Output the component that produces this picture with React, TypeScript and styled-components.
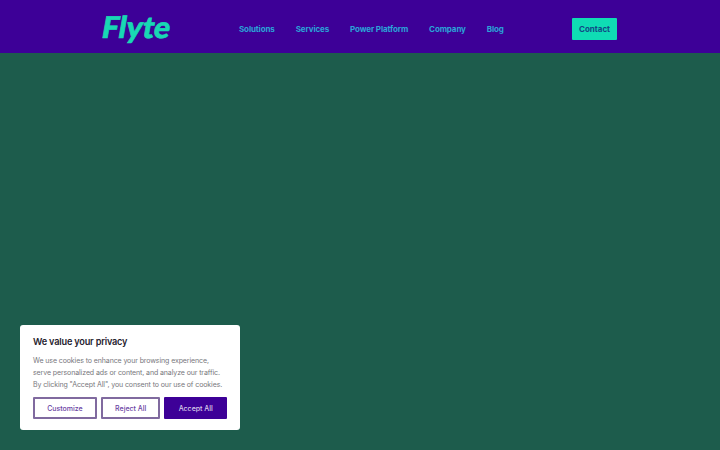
import React from "react";
import styled, { createGlobalStyle } from "styled-components";

const Global = createGlobalStyle`
  html, body { margin: 0; padding: 0; height: 100%; }
  body { background: #1d5c4c; font-family: Inter, sans-serif; }
`;
const Page = styled.div`
  width: 720px; height: 450px; overflow: hidden; background: #1d5c4c;
  display: flex; flex-direction: column;
`;
const Header = styled.header`
  height: 53px; flex: none; background: #3d0097;
  display: flex; align-items: center; padding: 5px 103px 0 102px; box-sizing: border-box;
`;
const Logo = styled.div`
  width: 137px; flex: none;
  font-family: Lato, sans-serif; font-weight: 900; font-size: 30px; line-height: 1;
  letter-spacing: 0.1px; color: #18d8b4; margin-top: -7px;
  -webkit-text-stroke: 0.7px #18d8b4;
`;
const LogoText = styled.span`
  display: inline-block; margin-left: -2px; transform: skewX(-10deg); transform-origin: 40% bottom;
`;
const Nav = styled.nav`
  flex: 1; display: flex; align-items: center; gap: 21px;
`;
const NavLink = styled.a`
  font-size: 8px; font-weight: 700; letter-spacing: -0.12px; color: #2aa4d8; line-height: 1;
`;
const Contact = styled.button`
  width: 45px; height: 22px; padding: 0; border: 0; border-radius: 1px; background: #0fdcb4;
  font: 700 8px Inter, sans-serif; color: #124a86;
`;
const Main = styled.main`
  flex: 1; position: relative;
`;
const Card = styled.section`
  position: absolute; left: 20px; bottom: 20px; width: 220px; height: 105px; box-sizing: border-box;
  background: #fff; border-radius: 3px; padding: 10px 13px;
`;
const Title = styled.h2`
  margin: 0 0 7px; font-size: 9.2px; letter-spacing: -0.2px; font-weight: 600; line-height: 13px; color: #26222e;
`;
const Body = styled.p`
  margin: 0 0 6px; font-size: 7px; letter-spacing: -0.1px; line-height: 12px; color: #77777c; white-space: nowrap;
`;
const Buttons = styled.div`
  display: flex; gap: 4px;
`;
const Btn = styled.button<{ $primary?: boolean }>`
  flex: 1 1 auto; height: 22px; padding: 0; box-sizing: border-box; border-radius: 1px;
  border: 2px solid ${p => (p.$primary ? "#3d0097" : "#806a9f")};
  background: ${p => (p.$primary ? "#3d0097" : "#fff")};
  color: ${p => (p.$primary ? "#d8cdea" : "#6a3fa3")};
  font: 500 7px Inter, sans-serif;
`;

export default function App() {
  return (
    <Page>
      <Global />
      <Header>
        <Logo><LogoText>Flyte</LogoText></Logo>
        <Nav>
          <NavLink>Solutions</NavLink>
          <NavLink>Services</NavLink>
          <NavLink>Power Platform</NavLink>
          <NavLink>Company</NavLink>
          <NavLink>Blog</NavLink>
        </Nav>
        <Contact>Contact</Contact>
      </Header>
      <Main>
        <Card>
          <Title>We value your privacy</Title>
          <Body>
            We use cookies to enhance your browsing experience,<br />
            serve personalized ads or content, and analyze our traffic.<br />
            By clicking "Accept All", you consent to our use of cookies.
          </Body>
          <Buttons>
            <Btn>Customize</Btn>
            <Btn>Reject All</Btn>
            <Btn $primary>Accept All</Btn>
          </Buttons>
        </Card>
      </Main>
    </Page>
  );
}
